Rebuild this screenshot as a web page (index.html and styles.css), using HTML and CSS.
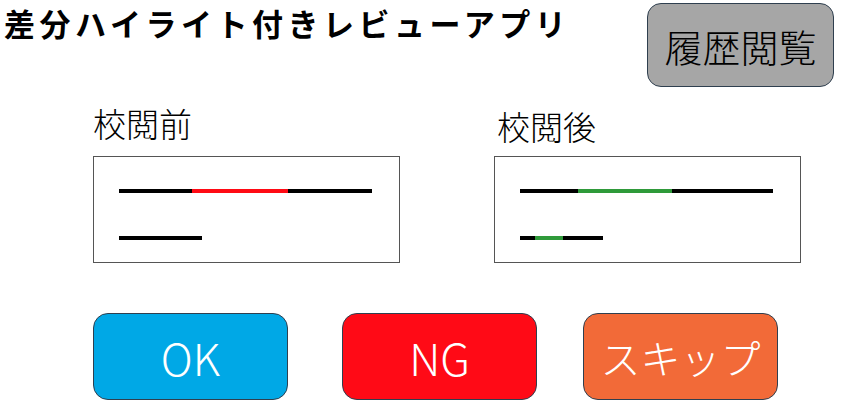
FILE: index.html
```html
<!DOCTYPE html>
<html lang="ja">
<head>
<meta charset="utf-8">
<title>差分ハイライト付きレビューアプリ</title>
<link rel="stylesheet" href="styles.css">
</head>
<body>
<div class="app">
  <header class="header">
    <h1 class="title">差分ハイライト付きレビューアプリ</h1>
    <button class="history-btn">履歴閲覧</button>
  </header>

  <section class="panels">
    <div class="panel">
      <div class="panel-label">校閲前</div>
      <div class="panel-box">
        <div class="text-line">
          <span class="seg seg-plain" style="width:73px"></span>
          <span class="seg seg-removed" style="width:96px"></span>
          <span class="seg seg-plain" style="width:84px"></span>
        </div>
        <div class="text-line">
          <span class="seg seg-plain" style="width:83px"></span>
        </div>
      </div>
    </div>
    <div class="panel">
      <div class="panel-label panel-label-after">校閲後</div>
      <div class="panel-box">
        <div class="text-line">
          <span class="seg seg-plain" style="width:58px"></span>
          <span class="seg seg-added" style="width:94px"></span>
          <span class="seg seg-plain" style="width:101px"></span>
        </div>
        <div class="text-line">
          <span class="seg seg-plain" style="width:15px"></span>
          <span class="seg seg-added" style="width:28px"></span>
          <span class="seg seg-plain" style="width:40px"></span>
        </div>
      </div>
    </div>
  </section>

  <section class="actions">
    <button class="action-btn btn-ok">OK</button>
    <button class="action-btn btn-ng">NG</button>
    <button class="action-btn btn-skip">スキップ</button>
  </section>
</div>
</body>
</html>
```

FILE: styles.css
```css
* {
  box-sizing: border-box;
}

html, body {
  margin: 0;
  padding: 0;
  background: #ffffff;
}

body {
  font-family: "Noto Sans CJK JP", "Noto Sans", sans-serif;
  color: #000000;
  width: 842px;
  height: 416px;
  overflow: hidden;
}

.app {
  display: flex;
  flex-direction: column;
}

.header {
  display: flex;
  justify-content: space-between;
  align-items: flex-start;
  padding: 0 8px 0 4px;
  height: 87px;
}

.title {
  margin: 0;
  font-size: 31px;
  font-weight: 700;
  letter-spacing: 4.5px;
  line-height: 45px;
  white-space: nowrap;
  flex-shrink: 0;
}

.history-btn {
  flex-shrink: 0;
  margin-top: 3px;
  width: 187px;
  height: 84px;
  background: #a6a6a6;
  border: 1px solid #2f3f4f;
  border-radius: 14px;
  font-family: inherit;
  font-size: 38px;
  font-weight: 300;
  color: #000000;
  padding: 0;
  cursor: pointer;
}

.panels {
  display: flex;
  gap: 94px;
  padding-left: 93px;
  margin-top: 12px;
}

.panel {
  display: flex;
  flex-direction: column;
}

.panel-label {
  font-size: 33px;
  font-weight: 300;
  line-height: 48px;
  height: 48px;
  margin-bottom: 9px;
}

.panel-label-after {
  padding-left: 3px;
  padding-top: 3px;
}

.panel-box {
  width: 307px;
  height: 107px;
  border: 1px solid #555555;
  padding: 32px 0 0 25px;
  display: flex;
  flex-direction: column;
  gap: 43px;
}

.text-line {
  display: flex;
  height: 4px;
}

.seg {
  display: block;
  height: 4px;
}

.seg-plain {
  background: #000000;
}

.seg-removed {
  background: #ff0a14;
}

.seg-added {
  background: #2f9a3a;
}

.actions {
  display: flex;
  padding-left: 93px;
  margin-top: 50px;
}

.action-btn {
  width: 195px;
  height: 87px;
  border: 1px solid #2f3f4f;
  border-radius: 15px;
  font-family: inherit;
  font-weight: 300;
  color: #ffffff;
  padding: 0;
  cursor: pointer;
}

.btn-ok {
  background: #00a8e6;
  font-size: 44px;
}

.btn-ng {
  background: #ff0a16;
  font-size: 44px;
  margin-left: 54px;
}

.btn-skip {
  background: #f26a38;
  font-size: 40px;
  margin-left: 46px;
}
```
